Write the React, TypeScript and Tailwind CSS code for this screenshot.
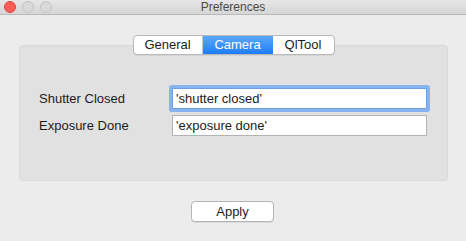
import React from 'react';

const TrafficLight: React.FC<{ color: string }> = ({ color }) => (
  <div className={`w-[12px] h-[12px] rounded-full border ${color}`} />
);

export default function App() {
  return (
    <div className="w-[466px] h-[241px] bg-[#ececec] font-['Liberation_Sans',Arial,sans-serif] text-[#1c1c1c] overflow-hidden">
      {/* Title bar */}
      <div className="relative h-[15px] bg-gradient-to-b from-[#e6e6e6] to-[#d6d6d6] border-b border-[#b9b9b9] flex items-center justify-center">
        <div className="absolute left-[4px] top-[1px] flex gap-[6px]">
          <TrafficLight color="bg-[#fc5f57] border-[#e2463f]" />
          <TrafficLight color="bg-[#d9d9d9] border-[#c4c4c4]" />
          <TrafficLight color="bg-[#d9d9d9] border-[#c4c4c4]" />
        </div>
        <span className="text-[12px] leading-[14px] text-[#4a4a4a]">Preferences</span>
      </div>

      {/* Tab panel */}
      <div className="mt-[30px] ml-[19px] w-[429px] h-[136px] bg-[#e1e1e1] border border-[#d8d8d8] rounded-[4px] flex flex-col">
        <div className="flex justify-center -mt-[11px]">
          <div className="flex h-[20px] border border-[#b8b8b8] rounded-[4px] overflow-hidden bg-white text-[13px] shadow-[0_1px_0_rgba(0,0,0,0.05)]">
            <div className="w-[69px] flex items-center justify-center border-r border-[#c8c8c8]">General</div>
            <div className="w-[70px] flex items-center justify-center bg-gradient-to-b from-[#5aa8f8] to-[#1b7df4] text-white">Camera</div>
            <div className="w-[61px] flex items-center justify-center">QlTool</div>
          </div>
        </div>

        <div className="mt-[33px] flex flex-col gap-[6px] pl-[19px]">
          <div className="flex items-center">
            <span className="w-[133px] text-[13px]">Shutter Closed</span>
            <div className="w-[255px] h-[21px] border border-[#6f9fe0] bg-white rounded-[1px] ring-[3px] ring-[#86b4ef] flex items-center pl-[3px] text-[13px]">
              'shutter closed'
            </div>
          </div>
          <div className="flex items-center">
            <span className="w-[133px] text-[13px]">Exposure Done</span>
            <div className="w-[255px] h-[21px] border border-[#b3b3b3] bg-white flex items-center pl-[3px] text-[13px]">
              'exposure done'
            </div>
          </div>
        </div>
      </div>

      {/* Apply */}
      <div className="flex justify-center mt-[20px] pr-[1px]">
        <button className="w-[83px] h-[21px] bg-white border border-[#b5b5b5] rounded-[4px] text-[13px] leading-none shadow-[0_1px_0_rgba(0,0,0,0.08)]">
          Apply
        </button>
      </div>
    </div>
  );
}
